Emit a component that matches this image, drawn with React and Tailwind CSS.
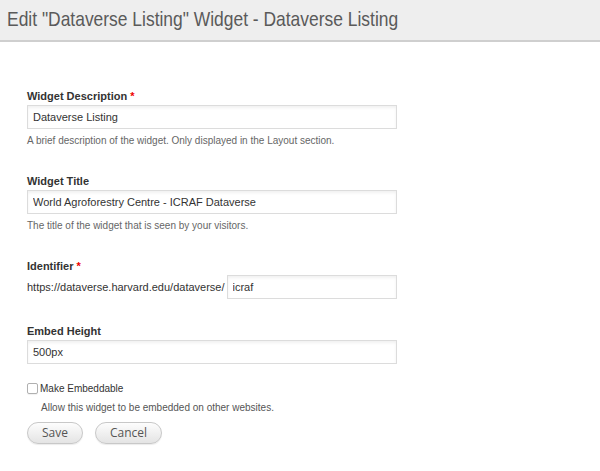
import React from "react";

const Label = ({ children, required }) => (
  <label className="block text-[11px] font-bold text-[#333] leading-[13px] mb-[2px]">
    {children}
    {required && <span className="text-[#e00] ml-[3px]">*</span>}
  </label>
);

const TextInput = ({ value, className = "" }) => (
  <input
    type="text"
    defaultValue={value}
    className={`block h-[24px] border border-[#dcdcdc] bg-white px-[5px] text-[11px] text-[#333] shadow-[inset_0_2px_3px_rgba(0,0,0,0.06)] outline-none ${className}`}
  />
);

const Help = ({ children }) => (
  <p className="text-[10px] text-[#666] mt-[6px] leading-[12px]">{children}</p>
);

const Button = ({ children }) => (
  <button className="h-[22px] px-[14px] rounded-full border border-[#c8c8c8] bg-gradient-to-b from-[#fdfdfd] to-[#e4e4e4] text-[12px] leading-none text-[#555] shadow-[0_1px_1px_rgba(0,0,0,0.08)] font-['Open_Sans',sans-serif]">
    {children}
  </button>
);

export default function App() {
  return (
    <div className="w-[600px] h-[471px] bg-white font-['Liberation_Sans',Arial,sans-serif] overflow-hidden">
      <div className="h-[42px] bg-[#eeeeee] border-b-2 border-[#cfcfcf] pl-[7px] pt-[7px]">
        <h1 className="text-[21px] leading-[24px] text-[#5a5a5a] whitespace-nowrap origin-left scale-x-[0.83]">
          Edit "Dataverse Listing" Widget - Dataverse Listing
        </h1>
      </div>

      <form className="pl-[27px] pt-[48px]">
        <div>
          <Label required>Widget Description</Label>
          <TextInput value="Dataverse Listing" className="w-[370px]" />
          <Help>A brief description of the widget. Only displayed in the Layout section.</Help>
        </div>

        <div className="mt-[28px]">
          <Label>Widget Title</Label>
          <TextInput value="World Agroforestry Centre - ICRAF Dataverse" className="w-[370px]" />
          <Help>The title of the widget that is seen by your visitors.</Help>
        </div>

        <div className="mt-[28px]">
          <Label required>Identifier</Label>
          <div className="flex items-center w-[370px]">
            <span className="text-[11px] text-[#333] mr-[2px] whitespace-nowrap">
              https://dataverse.harvard.edu/dataverse/
            </span>
            <TextInput value="icraf" className="flex-1 min-w-0" />
          </div>
        </div>

        <div className="mt-[26px]">
          <Label>Embed Height</Label>
          <TextInput value="500px" className="w-[370px]" />
        </div>

        <div className="mt-[18px]">
          <label className="flex items-center h-[13px] text-[10px] text-[#333]">
            <span className="w-[11px] h-[11px] border border-[#b0b0b0] rounded-[2px] bg-white shadow-[0_1px_1px_rgba(0,0,0,0.06)] mr-[2px]" />
            Make Embeddable
          </label>
          <p className="text-[10px] leading-[12px] text-[#555] ml-[14px] mt-[7px]">
            Allow this widget to be embedded on other websites.
          </p>
        </div>

        <div className="flex gap-[12px] mt-[8px]">
          <Button>Save</Button>
          <Button>Cancel</Button>
        </div>
      </form>
    </div>
  );
}
